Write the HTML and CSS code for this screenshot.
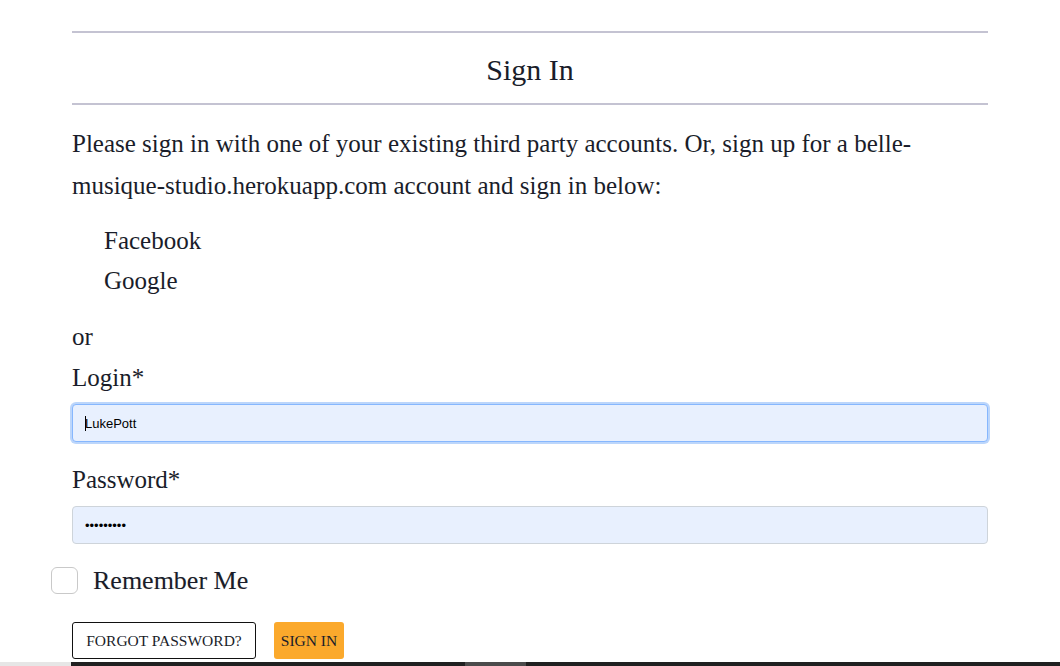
FILE: index.html
```html
<!DOCTYPE html>
<html lang="en">
<head>
<meta charset="utf-8">
<title>Sign In</title>
<link rel="stylesheet" href="styles.css">
</head>
<body>
<main class="page">
  <div class="content">
    <hr class="rule">
    <h1 class="title">Sign In</h1>
    <hr class="rule">
    <p class="intro">Please sign in with one of your existing third party accounts. Or, sign up for a belle-musique-studio.herokuapp.com account and sign in below:</p>
    <ul class="providers">
      <li>Facebook</li>
      <li>Google</li>
    </ul>
    <p class="or">or</p>
    <form class="login-form">
      <label class="field-label" for="login">Login*</label>
      <div class="input-wrap">
        <input class="field focused" id="login" type="text" value="LukePott">
        <span class="caret"></span>
      </div>
      <label class="field-label" for="password">Password*</label>
      <div class="input-wrap">
        <input class="field" id="password" type="password" value="abcdefghi">
      </div>
      <div class="remember">
        <span class="checkbox"></span>
        <span class="remember-text">Remember Me</span>
      </div>
      <div class="actions">
        <a class="btn btn-outline" href="#">Forgot Password?</a>
        <button class="btn btn-primary" type="button">Sign In</button>
      </div>
    </form>
  </div>
  <div class="bottom-strip">
    <span class="strip-light"></span>
    <span class="strip-dark"><span class="strip-seg"></span></span>
  </div>
</main>
</body>
</html>
```
FILE: styles.css
```css
* { box-sizing: border-box; }
html, body {
  margin: 0;
  padding: 0;
  background: #ffffff;
}
body {
  font-family: "Liberation Serif", "Times New Roman", serif;
  color: #1a1d2a;
  height: 666px;
  overflow: hidden;
}
.page {
  display: flex;
  flex-direction: column;
  height: 666px;
}
.content {
  padding: 31px 72px 0 72px;
  flex: 1;
}
.rule {
  border: 0;
  height: 2px;
  background: #c4c3d2;
  margin: 0;
}
.title {
  font-size: 30px;
  font-weight: normal;
  text-align: center;
  margin: 0;
  height: 70px;
  line-height: 74px;
}
.intro {
  font-size: 25px;
  line-height: 42px;
  margin: 18px 0 0 0;
}
.providers {
  list-style: none;
  margin: 14px 0 0 0;
  padding: 0 0 0 32px;
  font-size: 25px;
  line-height: 40px;
}
.or {
  margin: 16px 0 0 0;
  font-size: 25px;
  line-height: 40px;
}
.login-form {
  display: flex;
  flex-direction: column;
}
.field-label {
  font-size: 25px;
  line-height: 40px;
  margin-top: 1px;
}
.field-label + .input-wrap { margin-top: 6px; }
.input-wrap + .field-label { margin-top: 18px; }
.input-wrap {
  position: relative;
}
.field {
  width: 100%;
  height: 38px;
  border: 1px solid #ced4da;
  border-radius: 4px;
  background: #e8f0fe;
  padding: 0 12px;
  font-family: "Liberation Sans", Arial, sans-serif;
  font-size: 13px;
  color: #000;
  outline: none;
  display: block;
}
.field.focused {
  border-color: #86b7fe;
  box-shadow: 0 0 0 2px #bcd6fb;
}
.caret {
  position: absolute;
  left: 13px;
  top: 12px;
  width: 1px;
  height: 15px;
  background: #000;
}
.remember {
  display: flex;
  align-items: center;
  margin-top: 17px;
  margin-left: -21px;
  height: 40px;
}
.checkbox {
  width: 27px;
  height: 27px;
  border: 1px solid #c9c9c9;
  border-radius: 6px;
  background: #fff;
  flex: none;
  margin-top: -2px;
}
.remember-text {
  font-size: 26px;
  margin-left: 15px;
  text-shadow: 0 0 1px rgba(0,0,0,0.15);
}
.actions {
  display: flex;
  gap: 18px;
  margin-top: 21px;
}
.btn {
  height: 37px;
  display: inline-flex;
  align-items: center;
  justify-content: center;
  font-family: "Liberation Serif", "Times New Roman", serif;
  font-size: 15.5px;
  text-transform: uppercase;
  color: #1a1d2a;
  text-decoration: none;
  border-radius: 3px;
  cursor: pointer;
  padding-top: 1px;
}
.btn-outline {
  width: 184px;
  border: 1px solid #111;
  background: #fff;
}
.btn-primary {
  width: 70px;
  border: 0;
  background: #fba92c;
}
.bottom-strip {
  display: flex;
  height: 4px;
  flex: none;
}
.strip-light {
  width: 71px;
  background: #e6e6e6;
}
.strip-dark {
  flex: 1;
  background: #202020;
  display: flex;
  padding-left: 394px;
}
.strip-seg {
  width: 61px;
  background: #4b4b4b;
}
```
